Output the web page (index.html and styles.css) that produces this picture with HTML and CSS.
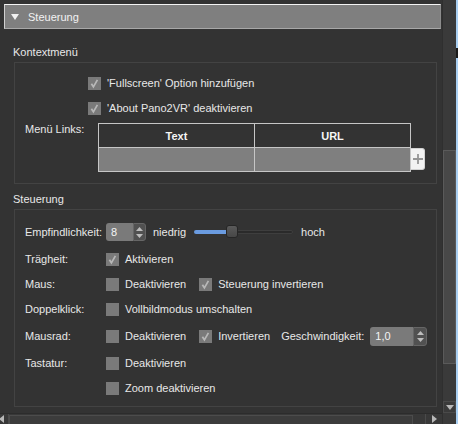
FILE: index.html
```html
<!DOCTYPE html>
<html lang="de">
<head>
<meta charset="utf-8">
<title>Steuerung</title>
<link rel="stylesheet" href="styles.css">
</head>
<body>
<div class="window">
  <div class="content">
    <div class="header">
      <svg class="tri" width="8" height="6" viewBox="0 0 8 6"><path d="M0 0H8L4 6Z" fill="#f2f2f2"/></svg>
      <span>Steuerung</span>
    </div>

    <div class="sec-title">Kontextmenü</div>
    <div class="group g1">
      <div class="rows">
        <div class="row opt">
          <label class="chk"><span class="cb"><svg viewBox="0 0 13 13"><path d="M3.4 6.8 L5.4 9.8 L9.4 2.8" fill="none" stroke="#b8b8b8" stroke-width="1.7"/></svg></span>'Fullscreen' Option hinzufügen</label>
        </div>
        <div class="row opt">
          <label class="chk"><span class="cb"><svg viewBox="0 0 13 13"><path d="M3.4 6.8 L5.4 9.8 L9.4 2.8" fill="none" stroke="#b8b8b8" stroke-width="1.7"/></svg></span>'About Pano2VR' deaktivieren</label>
        </div>
        <div class="links">
          <span class="lbl-links">Menü Links:</span>
          <div class="tbl">
            <div class="thead"><div class="th">Text</div><div class="th">URL</div></div>
            <div class="tbody"><div class="td"></div><div class="td"></div></div>
          </div>
          <div class="plus"><svg width="10" height="10" viewBox="0 0 10 10"><path d="M5 0V10M0 5H10" stroke="#959595" stroke-width="1.8"/></svg></div>
        </div>
      </div>
    </div>

    <div class="sec-title second">Steuerung</div>
    <div class="group g2">
      <div class="rows">
        <div class="row tall">
          <span class="lbl">Empfindlichkeit:</span>
          <div class="spin s1">
            <span class="field">8</span>
            <span class="btns">
              <svg width="7" height="4" viewBox="0 0 7 4"><path d="M0 4H7L3.5 0Z" fill="#bdbdbd"/></svg>
              <svg width="7" height="4" viewBox="0 0 7 4"><path d="M0 0H7L3.5 4Z" fill="#bdbdbd"/></svg>
            </span>
          </div>
          <span class="t-niedrig">niedrig</span>
          <div class="slider">
            <span class="g-fill"></span><span class="g-rest"></span>
            <span class="thumb"></span>
          </div>
          <span class="t-hoch">hoch</span>
        </div>
        <div class="row">
          <span class="lbl">Trägheit:</span>
          <label class="chk"><span class="cb"><svg viewBox="0 0 13 13"><path d="M3.4 6.8 L5.4 9.8 L9.4 2.8" fill="none" stroke="#b8b8b8" stroke-width="1.7"/></svg></span>Aktivieren</label>
        </div>
        <div class="row">
          <span class="lbl">Maus:</span>
          <label class="chk"><span class="cb"></span>Deaktivieren</label>
          <label class="chk"><span class="cb"><svg viewBox="0 0 13 13"><path d="M3.4 6.8 L5.4 9.8 L9.4 2.8" fill="none" stroke="#b8b8b8" stroke-width="1.7"/></svg></span>Steuerung invertieren</label>
        </div>
        <div class="row">
          <span class="lbl">Doppelklick:</span>
          <label class="chk"><span class="cb"></span>Vollbildmodus umschalten</label>
        </div>
        <div class="row tall">
          <span class="lbl">Mausrad:</span>
          <label class="chk"><span class="cb"></span>Deaktivieren</label>
          <label class="chk"><span class="cb"><svg viewBox="0 0 13 13"><path d="M3.4 6.8 L5.4 9.8 L9.4 2.8" fill="none" stroke="#b8b8b8" stroke-width="1.7"/></svg></span>Invertieren</label>
          <span class="t-speed">Geschwindigkeit:</span>
          <div class="spin s2">
            <span class="field">1,0</span>
            <span class="btns">
              <svg width="7" height="4" viewBox="0 0 7 4"><path d="M0 4H7L3.5 0Z" fill="#bdbdbd"/></svg>
              <svg width="7" height="4" viewBox="0 0 7 4"><path d="M0 0H7L3.5 4Z" fill="#bdbdbd"/></svg>
            </span>
          </div>
        </div>
        <div class="row">
          <span class="lbl">Tastatur:</span>
          <label class="chk"><span class="cb"></span>Deaktivieren</label>
        </div>
        <div class="row">
          <span class="lbl"></span>
          <label class="chk"><span class="cb"></span>Zoom deaktivieren</label>
        </div>
      </div>
    </div>
  </div>

  <div class="vscroll">
    <div class="vthumb"></div>
    <div class="vspace"></div>
    <div class="vdown"><svg width="8" height="5" viewBox="0 0 8 5"><path d="M0 0H8L4 5Z" fill="#b8b8b8"/></svg></div>
  </div>
  <div class="edge"></div>
  <div class="hscroll">
    <div class="hleft"><svg width="5" height="8" viewBox="0 0 5 8"><path d="M5 0V8L0 4Z" fill="#b8b8b8"/></svg></div>
    <div class="hthumb"></div>
    <div class="hspace"></div>
    <div class="hright"><svg width="5" height="8" viewBox="0 0 5 8"><path d="M0 0V8L5 4Z" fill="#b8b8b8"/></svg></div>
  </div>
  <div class="corner"></div>
</div>
</body>
</html>
```

FILE: styles.css
```css
* { box-sizing: border-box; }

body {
  margin: 0;
  background: #333333;
  font-family: "Liberation Sans", Arial, sans-serif;
  font-size: 11px;
  color: #e8e8e8;
}

.window {
  display: grid;
  grid-template-columns: 442px 14px 2px;
  grid-template-rows: 413px 11px;
  width: 458px;
  height: 424px;
  overflow: hidden;
  background: #333333;
}

.content {
  grid-column: 1;
  grid-row: 1;
  padding: 4px 0 0 4px;
  overflow: hidden;
}

.header {
  width: 437px;
  height: 25px;
  background: #7f7f7f;
  border-top: 1px solid #f4f4f4;
  border-left: 1px solid #d0d0d0;
  border-bottom: 1px solid #a8a8a8;
  border-right: 1px solid #8c8c8c;
  display: flex;
  align-items: center;
  padding-left: 6px;
  gap: 9px;
  color: #f2f2f2;
}

.tri { flex: none; margin-top: 1px; }

.sec-title {
  margin-top: 16px;
  padding-left: 9px;
  height: 14px;
  line-height: 14px;
}
.sec-title.second { margin-top: 8px; }

.group {
  margin: 3px 0 0 10px;
  width: 423px;
  border: 1px solid #434343;
  padding: 10px 0 0 10px;
}
.g1 { height: 122px; }
.g2 { height: 198px; }

.rows {
  display: flex;
  flex-direction: column;
  gap: 5px;
}

.row {
  display: flex;
  align-items: center;
  height: 20px;
}
.row.tall { height: 24px; }
.row.opt { padding-left: 63px; }

.lbl { width: 81px; flex: none; }

.chk {
  display: flex;
  align-items: center;
  gap: 6px;
  white-space: nowrap;
}
.chk + .chk { margin-left: 13px; }

.cb {
  width: 13px;
  height: 13px;
  flex: none;
  background: #7a7a7a;
  display: inline-flex;
}
.cb svg { width: 13px; height: 13px; }

/* Menü Links table */
.links {
  display: flex;
  align-items: flex-start;
}
.lbl-links {
  width: 73px;
  flex: none;
  line-height: 14px;
  margin-top: -1px;
}
.tbl {
  width: 313px;
  border: 1px solid #c6c6c6;
}
.thead, .tbody {
  display: grid;
  grid-template-columns: 156px 1fr;
}
.thead { height: 23px; }
.tbody {
  height: 24px;
  border-top: 1px solid #c6c6c6;
  background: #7f7f7f;
}
.th {
  display: flex;
  align-items: center;
  justify-content: center;
  font-weight: bold;
  color: #f6f6f6;
}
.th:first-child, .td:first-child { border-right: 1px solid #c6c6c6; }

.plus {
  width: 14px;
  height: 22px;
  margin-top: 25px;
  background: #f2f2f2;
  border: 1px solid #d2d2d2;
  border-left: none;
  border-radius: 0 3px 3px 0;
  display: flex;
  align-items: center;
  justify-content: center;
}

/* spin boxes */
.spin {
  display: flex;
  height: 18px;
  width: 40px;
  flex: none;
}
.spin.s2 { width: 57px; height: 19px; }
.spin .field {
  flex: 1;
  background: #7a7a7a;
  border-radius: 3px 0 0 3px;
  padding-left: 5px;
  display: flex;
  align-items: center;
  color: #f4f4f4;
}
.spin .btns {
  width: 13px;
  flex: none;
  background: #515151;
  border: 1px solid #666666;
  border-radius: 0 3px 3px 0;
  display: flex;
  flex-direction: column;
  align-items: center;
  justify-content: center;
  gap: 3px;
}
.spin.s2 .btns { width: 14px; }

.t-niedrig { margin-left: 7px; }
.t-hoch { margin-left: 8px; }
.t-speed { margin-left: 11px; margin-right: 6px; }

/* slider */
.slider {
  position: relative;
  width: 99px;
  height: 14px;
  margin-left: 8px;
  display: flex;
  align-items: center;
  flex: none;
}
.g-fill {
  width: 33px;
  height: 4px;
  background: #6a9be0;
  border-radius: 2px 0 0 2px;
}
.g-rest {
  flex: 1;
  height: 4px;
  background: #2a2a2a;
  border: 1px solid #3e3e3e;
  border-radius: 0 2px 2px 0;
}
.thumb {
  position: absolute;
  left: 32px;
  top: 0;
  width: 12px;
  height: 13px;
  background: linear-gradient(#5a5a5a, #474747);
  border: 1px solid #262626;
  border-radius: 3px;
}

/* scrollbars */
.vscroll {
  grid-column: 2;
  grid-row: 1;
  background: #3a3a3a;
  border-left: 1px solid #2f2f2f;
  display: flex;
  flex-direction: column;
  padding-top: 150px;
}
.vthumb {
  height: 214px;
  background: #484848;
  border: 1px solid #5a5a5a;
}
.vspace { flex: 1; }
.vdown {
  height: 12px;
  border: 1px solid #4a4a4a;
  display: flex;
  align-items: center;
  justify-content: center;
}

.edge {
  grid-column: 3;
  grid-row: 1 / span 2;
  background: linear-gradient(#a9cff2 0 48px, #1a1a1a 48px 58px, #a9cff2 58px);
}

.hscroll {
  grid-column: 1;
  grid-row: 2;
  background: #383838;
  border-top: 1px solid #2c2c2c;
  display: flex;
}
.hleft {
  width: 9px;
  border-right: 1px solid #4a4a4a;
  display: flex;
  align-items: center;
  justify-content: flex-start;
}
.hleft svg { margin-left: -1px; }
.hthumb {
  width: 404px;
  background: #3c3c3c;
  border: 1px solid #4c4c4c;
  border-bottom: none;
  margin-top: 1px;
}
.hspace { flex: 1; }
.hright {
  width: 17px;
  border-left: 1px solid #4a4a4a;
  display: flex;
  align-items: center;
  justify-content: center;
}

.corner {
  grid-column: 2;
  grid-row: 2;
  background: #3a3a3a;
  border-left: 1px solid #2f2f2f;
}
```
